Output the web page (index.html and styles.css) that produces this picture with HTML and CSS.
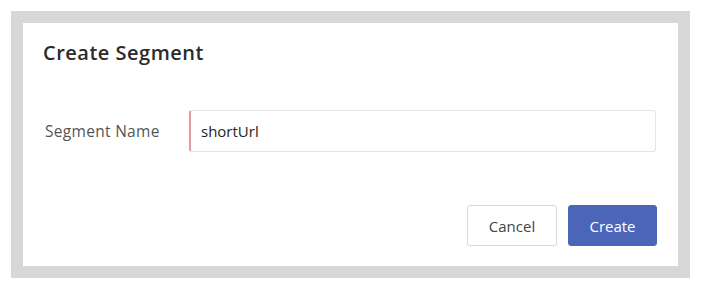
FILE: index.html
```html
<!DOCTYPE html>
<html lang="en">
<head>
    <meta charset="UTF-8">
    <title>Create Segment</title>
    <link rel="stylesheet" href="styles.css">
</head>
<body>
    <div class="modal-frame">
        <div class="modal">
            <h2 class="modal-title">Create Segment</h2>
            <div class="form-row">
                <label class="form-label" for="segmentName">Segment Name</label>
                <input class="form-input" id="segmentName" type="text" value="shortUrl">
            </div>
            <div class="modal-actions">
                <button class="btn btn-default">Cancel</button>
                <button class="btn btn-primary">Create</button>
            </div>
        </div>
    </div>
</body>
</html>
```

FILE: styles.css
```css
body {
    margin: 0;
    background-color: #fff;
    font-family: "Open Sans", Arial, sans-serif;
}
.modal-frame {
    margin: 11px;
    width: 655px;
    border: 12px solid #d7d7d7;
}
.modal {
    background-color: #fff;
    height: 243px;
    box-sizing: border-box;
    padding: 17px 21px 0 20px;
    display: flex;
    flex-direction: column;
}
.modal-title {
    margin: 0;
    font-size: 20px;
    font-weight: 600;
    letter-spacing: 0.5px;
    color: #2b2b2b;
    line-height: 26px;
}
.form-row {
    display: flex;
    align-items: center;
    margin-top: 44px;
    margin-right: 1px;
}
.form-label {
    width: 146px;
    padding-left: 2px;
    box-sizing: border-box;
    font-size: 15.5px;
    letter-spacing: 0.3px;
    color: #555;
}
.form-input {
    flex: 1;
    height: 42px;
    box-sizing: border-box;
    border: 1px solid #e3e3ea;
    border-left: 2px solid #e39a9a;
    border-radius: 3px;
    padding: 0 10px;
    font-family: inherit;
    font-size: 15px;
    color: #222;
    outline: none;
}
.modal-actions {
    display: flex;
    justify-content: flex-end;
    gap: 11px;
    margin-top: 53px;
}
.btn {
    height: 41px;
    width: 90px;
    border-radius: 3px;
    font-family: inherit;
    font-size: 15px;
    cursor: pointer;
}
.btn-default {
    background-color: #fff;
    border: 1px solid #d9d9d9;
    color: #444;
}
.btn-primary {
    background-color: #4b66b9;
    border: 1px solid #4b66b9;
    color: #fff;
    width: 89px;
}
```
